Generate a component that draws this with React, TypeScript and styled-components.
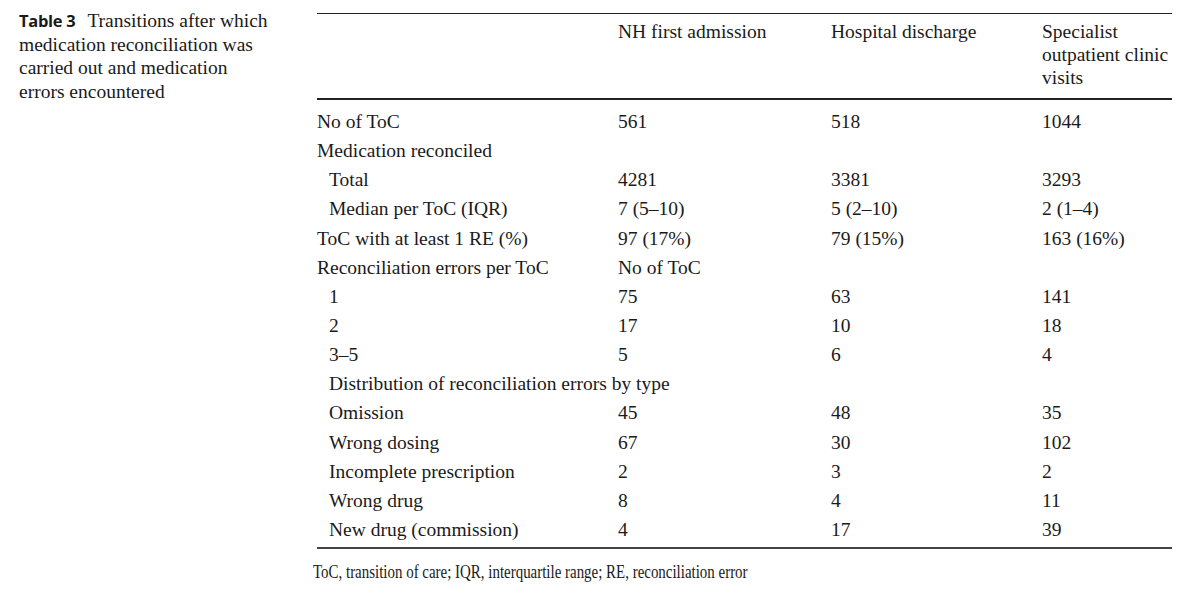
import React from "react";
import styled, { createGlobalStyle } from "styled-components";

const Global = createGlobalStyle`
  html, body { margin: 0; padding: 0; background: #fff; }
  body { font-family: "Liberation Serif", "Times New Roman", serif; color: #1a1a1a; }
`;

const Page = styled.div`
  display: flex;
  align-items: flex-start;
  padding: 13px 0 0 19px;
`;

const Caption = styled.div`
  width: 252px;
  margin-top: -4px;
  font-size: 19.5px;
  line-height: 23.5px;
  flex: none;
`;

const CaptionLabel = styled.span`
  font-family: "Open Sans", "Noto Sans", sans-serif;
  font-weight: 700;
  font-size: 16.5px;
  line-height: 20px;
  letter-spacing: -0.3px;
  margin-right: 12px;
`;

const TableWrap = styled.div`
  margin-left: 46px;
  width: 855px;
  flex: none;
`;

const Grid = styled.div`
  display: grid;
  grid-template-columns: 301px 213px 211px 130px;
  font-size: 19.5px;
`;

const HeadRow = styled(Grid)`
  border-top: 1px solid #222;
  border-bottom: 2px solid #222;
  padding: 6px 0 9px;
  line-height: 23px;
`;

const Body = styled.div`
  padding: 7px 0 3px;
  border-bottom: 2px solid #444;
`;

const Row = styled(Grid)`
  height: 29.15px;
  line-height: 29.15px;
  white-space: nowrap;
`;

const Cell = styled.div<{ $indent?: boolean }>`
  padding-left: ${(p) => (p.$indent ? "12px" : "0")};
`;

const Footnote = styled.div`
  margin-top: 12px;
  margin-left: -4px;
  font-size: 18px;
  line-height: 22px;
  white-space: nowrap;
  transform: scaleX(0.83);
  transform-origin: left center;
`;

type R = { label: string; indent?: boolean; v: string[] };

const rows: R[] = [
  { label: "No of ToC", v: ["561", "518", "1044"] },
  { label: "Medication reconciled", v: ["", "", ""] },
  { label: "Total", indent: true, v: ["4281", "3381", "3293"] },
  { label: "Median per ToC (IQR)", indent: true, v: ["7 (5–10)", "5 (2–10)", "2 (1–4)"] },
  { label: "ToC with at least 1 RE (%)", v: ["97 (17%)", "79 (15%)", "163 (16%)"] },
  { label: "Reconciliation errors per ToC", v: ["No of ToC", "", ""] },
  { label: "1", indent: true, v: ["75", "63", "141"] },
  { label: "2", indent: true, v: ["17", "10", "18"] },
  { label: "3–5", indent: true, v: ["5", "6", "4"] },
  { label: "Distribution of reconciliation errors by type", indent: true, v: [] },
  { label: "Omission", indent: true, v: ["45", "48", "35"] },
  { label: "Wrong dosing", indent: true, v: ["67", "30", "102"] },
  { label: "Incomplete prescription", indent: true, v: ["2", "3", "2"] },
  { label: "Wrong drug", indent: true, v: ["8", "4", "11"] },
  { label: "New drug (commission)", indent: true, v: ["4", "17", "39"] },
];

export default function App() {
  return (
    <>
      <Global />
      <Page>
        <Caption>
          <CaptionLabel>Table 3</CaptionLabel>Transitions after which medication reconciliation was carried out and
          medication errors encountered
        </Caption>
        <TableWrap>
          <HeadRow>
            <Cell />
            <Cell>NH first admission</Cell>
            <Cell>Hospital discharge</Cell>
            <Cell>
              Specialist
              <br />
              outpatient clinic
              <br />
              visits
            </Cell>
          </HeadRow>
          <Body>
            {rows.map((r, i) => (
              <Row key={i}>
                <Cell $indent={r.indent} style={r.v.length === 0 ? { gridColumn: "1 / -1" } : undefined}>
                  {r.label}
                </Cell>
                {r.v.map((x, j) => (
                  <Cell key={j}>{x}</Cell>
                ))}
              </Row>
            ))}
          </Body>
          <Footnote>ToC, transition of care; IQR, interquartile range; RE, reconciliation error</Footnote>
        </TableWrap>
      </Page>
    </>
  );
}
